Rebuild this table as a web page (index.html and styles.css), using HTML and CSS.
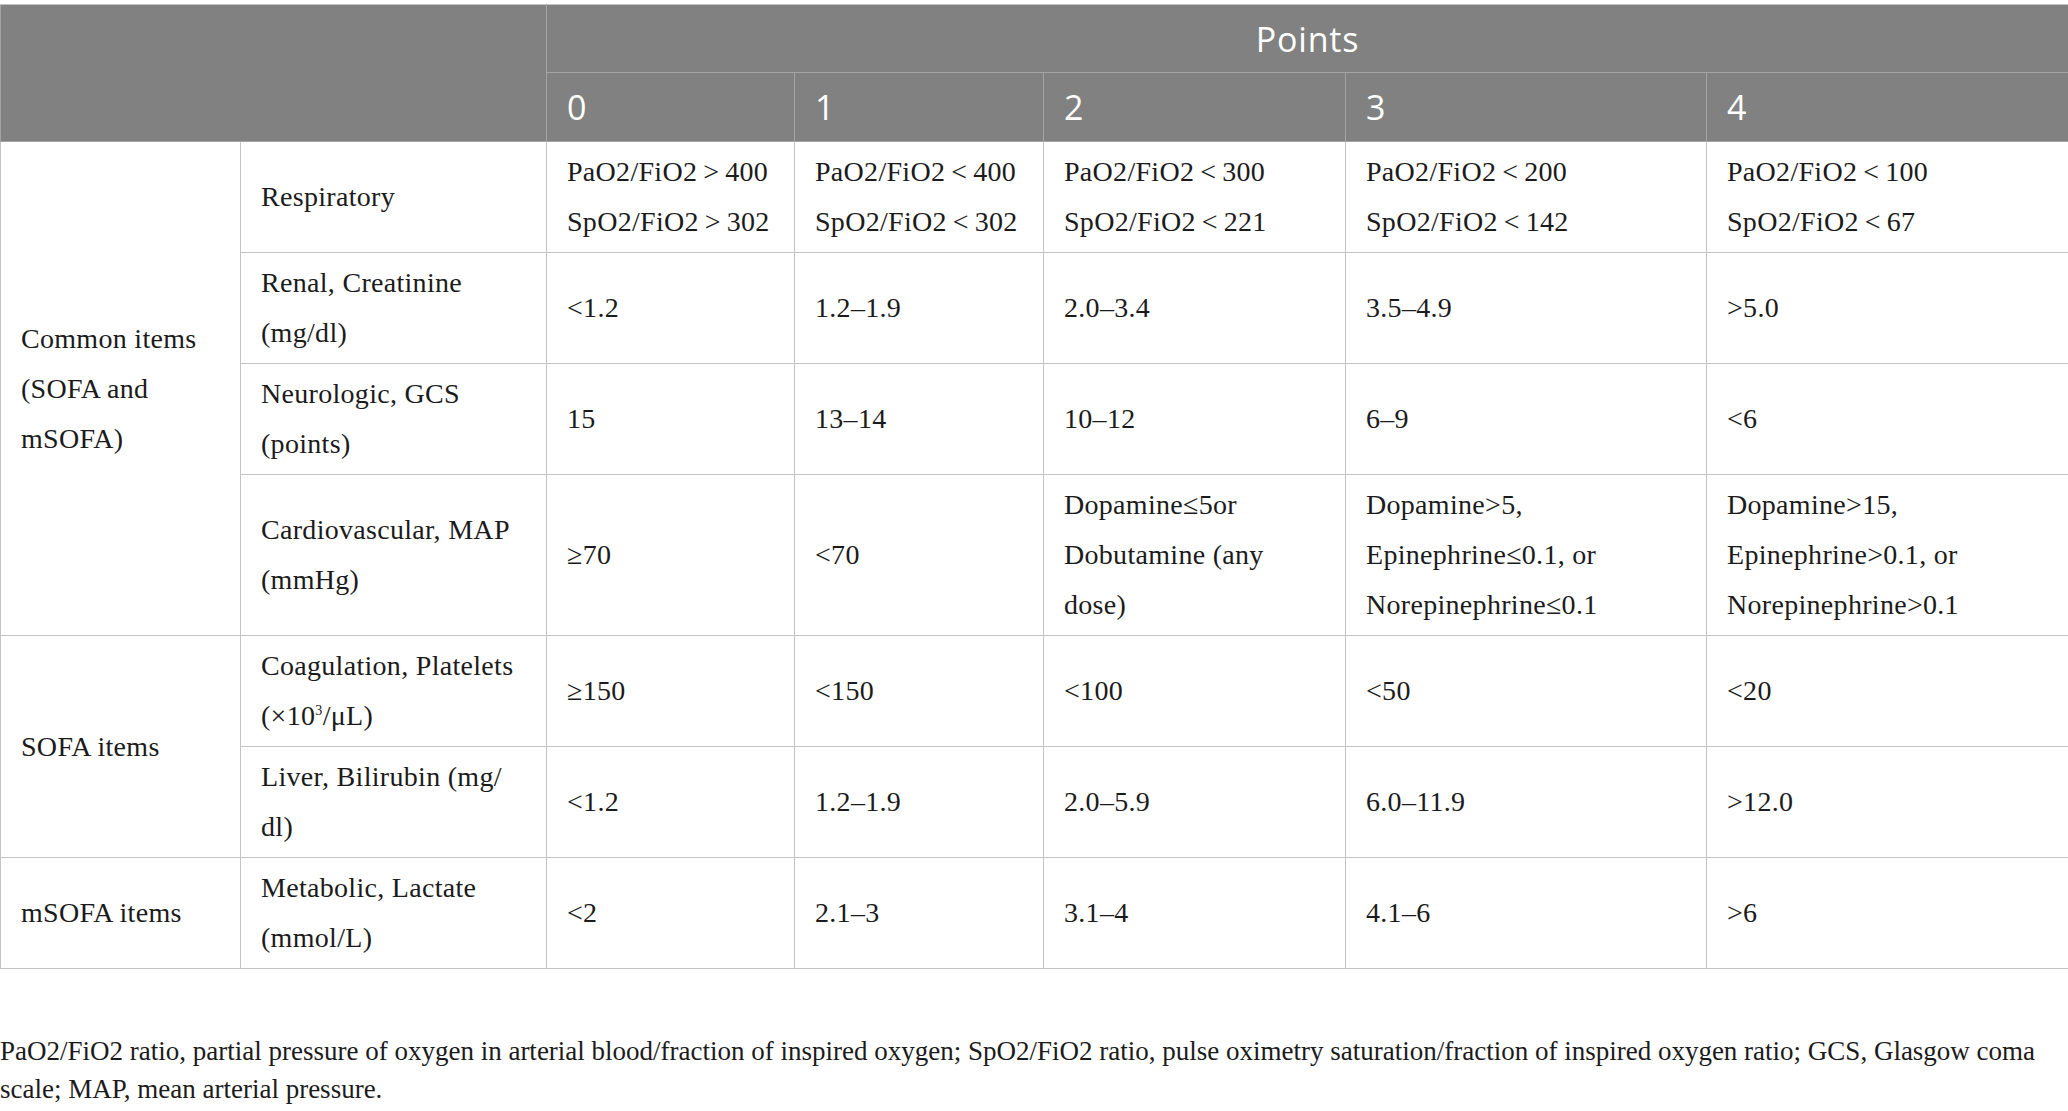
FILE: index.html
```html
<!DOCTYPE html>
<html>
<head>
    <title>SOFA and mSOFA scoring</title>
    <link rel="stylesheet" href="styles.css">
</head>
<body>
    <table class="score-table">
        <colgroup>
            <col class="col-group">
            <col class="col-item">
            <col class="col-p0">
            <col class="col-p1">
            <col class="col-p2">
            <col class="col-p3">
            <col class="col-p4">
        </colgroup>
        <thead>
            <tr class="head-top">
                <th colspan="2" rowspan="2"></th>
                <th colspan="5" class="points">Points</th>
            </tr>
            <tr class="head-sub">
                <th>0</th>
                <th>1</th>
                <th>2</th>
                <th>3</th>
                <th>4</th>
            </tr>
        </thead>
        <tbody>
            <tr>
                <td rowspan="4">Common items (SOFA and mSOFA)</td>
                <td>Respiratory</td>
                <td>PaO2/FiO2&#8201;&gt;&#8201;400<br>SpO2/FiO2&#8201;&gt;&#8201;302</td>
                <td>PaO2/FiO2&#8201;&lt;&#8201;400<br>SpO2/FiO2&#8201;&lt;&#8201;302</td>
                <td>PaO2/FiO2&#8201;&lt;&#8201;300<br>SpO2/FiO2&#8201;&lt;&#8201;221</td>
                <td>PaO2/FiO2&#8201;&lt;&#8201;200<br>SpO2/FiO2&#8201;&lt;&#8201;142</td>
                <td>PaO2/FiO2&#8201;&lt;&#8201;100<br>SpO2/FiO2&#8201;&lt;&#8201;67</td>
            </tr>
            <tr>
                <td>Renal, Creatinine (mg/dl)</td>
                <td>&lt;1.2</td>
                <td>1.2–1.9</td>
                <td>2.0–3.4</td>
                <td>3.5–4.9</td>
                <td>&gt;5.0</td>
            </tr>
            <tr>
                <td>Neurologic, GCS (points)</td>
                <td>15</td>
                <td>13–14</td>
                <td>10–12</td>
                <td>6–9</td>
                <td>&lt;6</td>
            </tr>
            <tr>
                <td>Cardiovascular, MAP (mmHg)</td>
                <td>≥70</td>
                <td>&lt;70</td>
                <td>Dopamine≤5or Dobutamine (any dose)</td>
                <td>Dopamine&gt;5, Epinephrine≤0.1, or Norepinephrine≤0.1</td>
                <td>Dopamine&gt;15, Epinephrine&gt;0.1, or Norepinephrine&gt;0.1</td>
            </tr>
            <tr>
                <td rowspan="2">SOFA items</td>
                <td>Coagulation, Platelets (×10<sup>3</sup>/μL)</td>
                <td>≥150</td>
                <td>&lt;150</td>
                <td>&lt;100</td>
                <td>&lt;50</td>
                <td>&lt;20</td>
            </tr>
            <tr>
                <td>Liver, Bilirubin (mg/<wbr>dl)</td>
                <td>&lt;1.2</td>
                <td>1.2–1.9</td>
                <td>2.0–5.9</td>
                <td>6.0–11.9</td>
                <td>&gt;12.0</td>
            </tr>
            <tr>
                <td>mSOFA items</td>
                <td>Metabolic, Lactate (mmol/L)</td>
                <td>&lt;2</td>
                <td>2.1–3</td>
                <td>3.1–4</td>
                <td>4.1–6</td>
                <td>&gt;6</td>
            </tr>
        </tbody>
    </table>

    <p class="footnote">PaO2/FiO2 ratio, partial pressure of oxygen in arterial blood/fraction of inspired oxygen; SpO2/FiO2 ratio, pulse oximetry saturation/fraction of inspired oxygen ratio; GCS, Glasgow coma scale; MAP, mean arterial pressure.</p>
</body>
</html>
```

FILE: styles.css
```css
body {
    margin: 0;
    padding-top: 4px;
    background-color: #fff;
    color: #1b1b1b;
    font-family: "Liberation Serif", "Times New Roman", serif;
}

.score-table {
    width: 2068px;
    border-collapse: collapse;
    table-layout: fixed;
    font-size: 28px;
    letter-spacing: 0.3px;
}

.col-group { width: 240px; }
.col-item { width: 306px; }
.col-p0 { width: 248px; }
.col-p1 { width: 249px; }
.col-p2 { width: 302px; }
.col-p3 { width: 361px; }
.col-p4 { width: 362px; }

.score-table th {
    background-color: #808180;
    color: #fff;
    font-family: "Open Sans", "Noto Sans", sans-serif;
    font-size: 34px;
    font-weight: normal;
    letter-spacing: 0.8px;
    text-align: left;
    padding: 0 20px;
    border: 1px solid #a3a4a3;
}

.score-table thead tr:first-child th {
    border-top-color: #c4c4c4;
}

.head-top {
    height: 68px;
}

.head-sub {
    height: 69px;
}

.score-table th.points {
    text-align: center;
}

.score-table td {
    padding: 5px 20px;
    line-height: 50px;
    vertical-align: middle;
    border: 1px solid #c4c4c4;
}

.score-table td sup {
    font-size: 14px;
    line-height: 0;
    vertical-align: 10px;
}

.footnote {
    margin: 63px 0 0;
    font-size: 27px;
    line-height: 38px;
    color: #1b1b1b;
}
```
